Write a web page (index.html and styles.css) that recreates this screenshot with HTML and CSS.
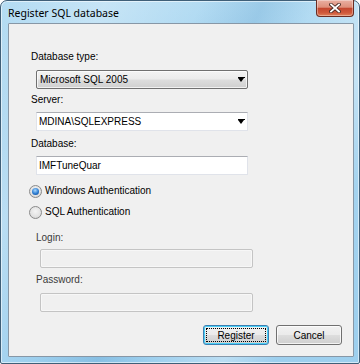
FILE: index.html
```html
<!DOCTYPE html>
<html lang="en">
<head>
<meta charset="utf-8">
<title>Register SQL database</title>
<link rel="stylesheet" href="styles.css">
</head>
<body>
<div class="window">
  <div class="titlebar">
    <span class="title">Register SQL database</span>
    <button class="close" type="button" aria-label="Close">
      <svg width="12" height="10" viewBox="0 0 12 10">
        <path d="M2 1.5 L10 8.5 M10 1.5 L2 8.5" stroke="#4a2a24" stroke-width="3.6" stroke-linecap="square" fill="none"/>
        <path d="M2 1.5 L10 8.5 M10 1.5 L2 8.5" stroke="#ffffff" stroke-width="1.8" stroke-linecap="square" fill="none"/>
      </svg>
    </button>
  </div>
  <div class="client">
    <div class="form">
      <div class="label l-type">Database type:</div>
      <div class="combo combo-list">
        <span class="combo-text">Microsoft SQL 2005</span>
        <span class="arrow"></span>
      </div>
      <div class="label l-server">Server:</div>
      <div class="combo combo-edit">
        <span class="combo-text edit-text">MDINA\SQLEXPRESS</span>
        <span class="arrow"></span>
      </div>
      <div class="label l-db">Database:</div>
      <div class="textbox">IMFTuneQuar</div>
      <div class="radio-row r-win">
        <span class="radio checked"><span class="dot"></span></span>
        <span class="radio-label">Windows Authentication</span>
      </div>
      <div class="radio-row r-sql">
        <span class="radio"></span>
        <span class="radio-label">SQL Authentication</span>
      </div>
      <div class="label sub l-login">Login:</div>
      <div class="textbox disabled"></div>
      <div class="label sub l-pass">Password:</div>
      <div class="textbox disabled tb-pass"></div>
      <div class="buttons">
        <button class="btn default" type="button"><span class="focus">Register</span></button>
        <button class="btn" type="button"><span>Cancel</span></button>
      </div>
    </div>
  </div>
</div>
</body>
</html>
```
FILE: styles.css
```css
* { box-sizing: border-box; }
html, body { margin: 0; padding: 0; background: #ffffff; }
body { width: 360px; height: 364px; overflow: hidden; }

.window {
  width: 360px;
  height: 364px;
  border: 1px solid #3f5f78;
  border-radius: 7px 7px 2px 2px;
  padding: 0 5px 6px 7px;
  display: flex;
  flex-direction: column;
  background:
    linear-gradient(115deg, rgba(255,255,255,0) 0%, rgba(255,255,255,0.25) 20%, rgba(255,255,255,0) 38%, rgba(40,120,180,0.18) 50%, rgba(255,255,255,0) 60%, rgba(255,255,255,0.3) 74%, rgba(255,255,255,0) 84%),
    linear-gradient(180deg, #b4dcf3 0%, #a6d4ef 40%, #9dcfee 100%);
  box-shadow: inset 0 0 0 1px rgba(255,255,255,0.55);
}

.titlebar {
  height: 23px;
  margin-top: -1px;
  flex: none;
  display: flex;
  justify-content: space-between;
  align-items: flex-start;
}
.title {
  font-family: "Noto Sans", "Open Sans", sans-serif;
  font-size: 10.5px;
  color: #000000;
  line-height: 14px;
  padding-top: 6px;
  padding-left: 0;
}
.close {
  width: 38px;
  height: 17px;
  margin: 0;
  padding: 0;
  border: 1px solid #6a2c22;
  border-top: none;
  border-radius: 0 0 4px 4px;
  background: linear-gradient(180deg, #eab0a2 0%, #de8f7b 45%, #c4472f 52%, #cf5a3c 80%, #e0815a 100%);
  box-shadow: inset 0 0 0 1px rgba(255,255,255,0.35);
  display: flex;
  align-items: center;
  justify-content: center;
}
.close svg { display: block; }

.client {
  flex: 1;
  background: #f0f0f0;
  border: 1px solid #8797a6;
  border-radius: 1px;
}

.form {
  display: flex;
  flex-direction: column;
  align-items: flex-start;
  padding: 27px 0 0 22px;
  font-family: "Liberation Sans", Arial, sans-serif;
  font-size: 10px;
  color: #000000;
}

.label { line-height: 12px; height: 12px; }
.l-server { margin-top: 5px; }
.l-db { margin-top: 7px; }
.sub { margin-left: 5px; color: #3a3a3a; }
.l-login { margin-top: 13px; }
.l-pass { margin-top: 6px; }

.combo, .textbox {
  width: 212px;
  height: 19px;
  margin-left: 5px;
  position: relative;
  display: flex;
  align-items: center;
}
.l-type + .combo { margin-top: 7px; }
.l-server + .combo { margin-top: 6px; }
.l-db + .textbox { margin-top: 6px; }
.combo-list {
  border: 1px solid #707070;
  border-radius: 2px;
  background: linear-gradient(180deg, #f3f3f3 0%, #ebebeb 48%, #dddddd 52%, #cfcfcf 100%);
  box-shadow: inset 0 0 0 1px rgba(255,255,255,0.7);
  padding-left: 3px;
}
.combo-edit, .textbox {
  border: 1px solid #e0e3ea;
  border-top-color: #abadb3;
  background: #ffffff;
  padding-left: 2px;
}
.combo-text { flex: 1; line-height: 12px; }
.arrow {
  width: 0;
  height: 0;
  border-left: 3.5px solid transparent;
  border-right: 3.5px solid transparent;
  border-top: 4px solid #000000;
  margin-right: 3px;
  position: relative;
}
.arrow::before {
  content: "";
  position: absolute;
  left: -3.5px;
  top: -5px;
  width: 7px;
  height: 1px;
  background: #000000;
}

.textbox.disabled {
  width: 213px;
  margin-left: 9px;
  margin-top: 5px;
  background: #f0f0f0;
  border: 1px solid #c4c4c4;
  border-radius: 2px;
  box-shadow: inset 0 0 0 1px #f7f7f7;
}
.textbox.tb-pass { margin-top: 7px; }

.radio-row {
  display: flex;
  align-items: center;
  height: 14px;
  margin-left: -2px;
  gap: 3px;
}
.r-win { margin-top: 9px; }
.r-sql { margin-top: 7px; }
.radio {
  width: 13px;
  height: 13px;
  border-radius: 50%;
  border: 1px solid #8a8a8a;
  background: radial-gradient(circle at 50% 40%, #f4f4f4 0%, #e2e2e2 60%, #c9c9c9 100%);
  display: flex;
  align-items: center;
  justify-content: center;
}
.dot {
  width: 7px;
  height: 7px;
  border-radius: 50%;
  background: radial-gradient(circle at 45% 35%, #a8d8ff 0%, #2b7bd0 55%, #0c3f8a 100%);
}
.radio-label { line-height: 12px; }

.buttons {
  align-self: flex-end;
  display: flex;
  gap: 7px;
  margin-top: 13px;
  margin-right: 11px;
}
.btn {
  width: 66px;
  height: 20px;
  margin: 0;
  padding: 0;
  border: 1px solid #707070;
  border-radius: 3px;
  background: linear-gradient(180deg, #f2f2f2 0%, #ebebeb 48%, #dddddd 52%, #cfcfcf 100%);
  box-shadow: inset 0 0 0 1px rgba(255,255,255,0.75);
  font-family: "Liberation Sans", Arial, sans-serif;
  font-size: 10px;
  color: #000000;
  display: flex;
  align-items: center;
  justify-content: center;
}
.btn.default {
  border-color: #3c7fb1;
  box-shadow: inset 0 0 0 1px #48d0f8;
  padding: 2px;
}
.btn .focus {
  flex: 1;
  align-self: stretch;
  display: flex;
  align-items: center;
  justify-content: center;
  border: 1px dotted #000000;
}
```
